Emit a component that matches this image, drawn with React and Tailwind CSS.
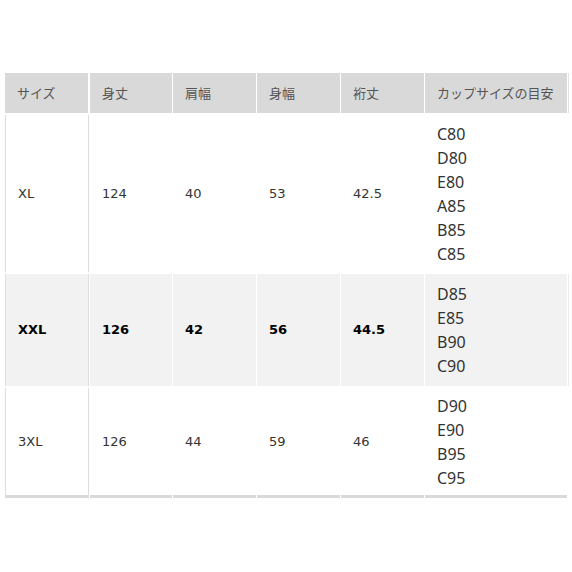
import React from "react";

const jp = { fontFamily: '"Noto Sans CJK JP", "Noto Sans", sans-serif' };

const rows = [
  { size: "XL", v: ["124", "40", "53", "42.5"], cups: ["C80", "D80", "E80", "A85", "B85", "C85"], h: "h-[157px]", bg: "bg-white", bold: false, last: false },
  { size: "XXL", v: ["126", "42", "56", "44.5"], cups: ["D85", "E85", "B90", "C90"], h: "h-[112px]", bg: "bg-[#f2f2f2]", bold: true, last: false },
  { size: "3XL", v: ["126", "44", "59", "46"], cups: ["D90", "E90", "B95", "C95"], h: "h-[110px]", bg: "bg-white", bold: false, last: true },
];

const widths = ["w-[82px]", "w-[83px]", "w-[83px]", "w-[83px]"];
const headers = ["身丈", "肩幅", "身幅", "裄丈"];

export default function App() {
  return (
    <div className="w-[572px] h-[572px] overflow-hidden bg-white pt-[73px] pl-[5px]">
      <div className="flex flex-col gap-[2px] w-[700px]">
        {/* header */}
        <div className="flex gap-px h-[40px] text-[13px] text-[#555]" style={jp}>
          <div className="w-[84px] shrink-0 bg-[#d9d9d9] border-r border-white flex items-center pl-3">サイズ</div>
          {headers.map((t, i) => (
            <div key={t} className={`${widths[i]} shrink-0 bg-[#d9d9d9] flex items-center pl-3`}>{t}</div>
          ))}
          <div className="w-[142px] shrink-0 bg-[#d9d9d9] flex items-center pl-3">カップサイズの目安</div>
          <div className="w-px shrink-0 bg-[#e2e2e2]"></div>
        </div>
        {rows.map((r) => (
          <div key={r.size} className={`flex gap-px ${r.h}`}>
            <div
              className={`w-[84px] shrink-0 ${r.bg} border-l border-r border-[#dddddd] ${r.last ? "border-b-[3px] border-b-[#d9d9d9]" : ""} flex items-center pl-3 text-[13px] ${r.bold ? "font-bold text-black" : "text-[#333]"}`}
              style={{ fontFamily: '"DejaVu Sans", Verdana, sans-serif' }}
            >
              {r.size}
            </div>
            {r.v.map((val, i) => (
              <div
                key={i}
                className={`${widths[i]} shrink-0 ${r.bg} ${r.last ? "border-b-[3px] border-[#d9d9d9]" : ""} flex items-center pl-3 text-[13px] ${r.bold ? "font-bold text-black" : "text-[#333]"}`}
                style={{ fontFamily: '"DejaVu Sans", Verdana, sans-serif' }}
              >
                {val}
              </div>
            ))}
            <div
              className={`w-[142px] shrink-0 ${r.bg} ${r.last ? "border-b-[3px] border-[#d9d9d9]" : ""} flex flex-col justify-center pl-3 text-[16px] leading-[24px] text-[#333]`}
              style={{ fontFamily: '"Noto Sans", sans-serif' }}
            >
              {r.cups.map((c) => (
                <div key={c}>{c}</div>
              ))}
            </div>
            <div className={`w-px shrink-0 ${r.bold ? "bg-[#ececec]" : "bg-white"}`}></div>
          </div>
        ))}
      </div>
    </div>
  );
}
